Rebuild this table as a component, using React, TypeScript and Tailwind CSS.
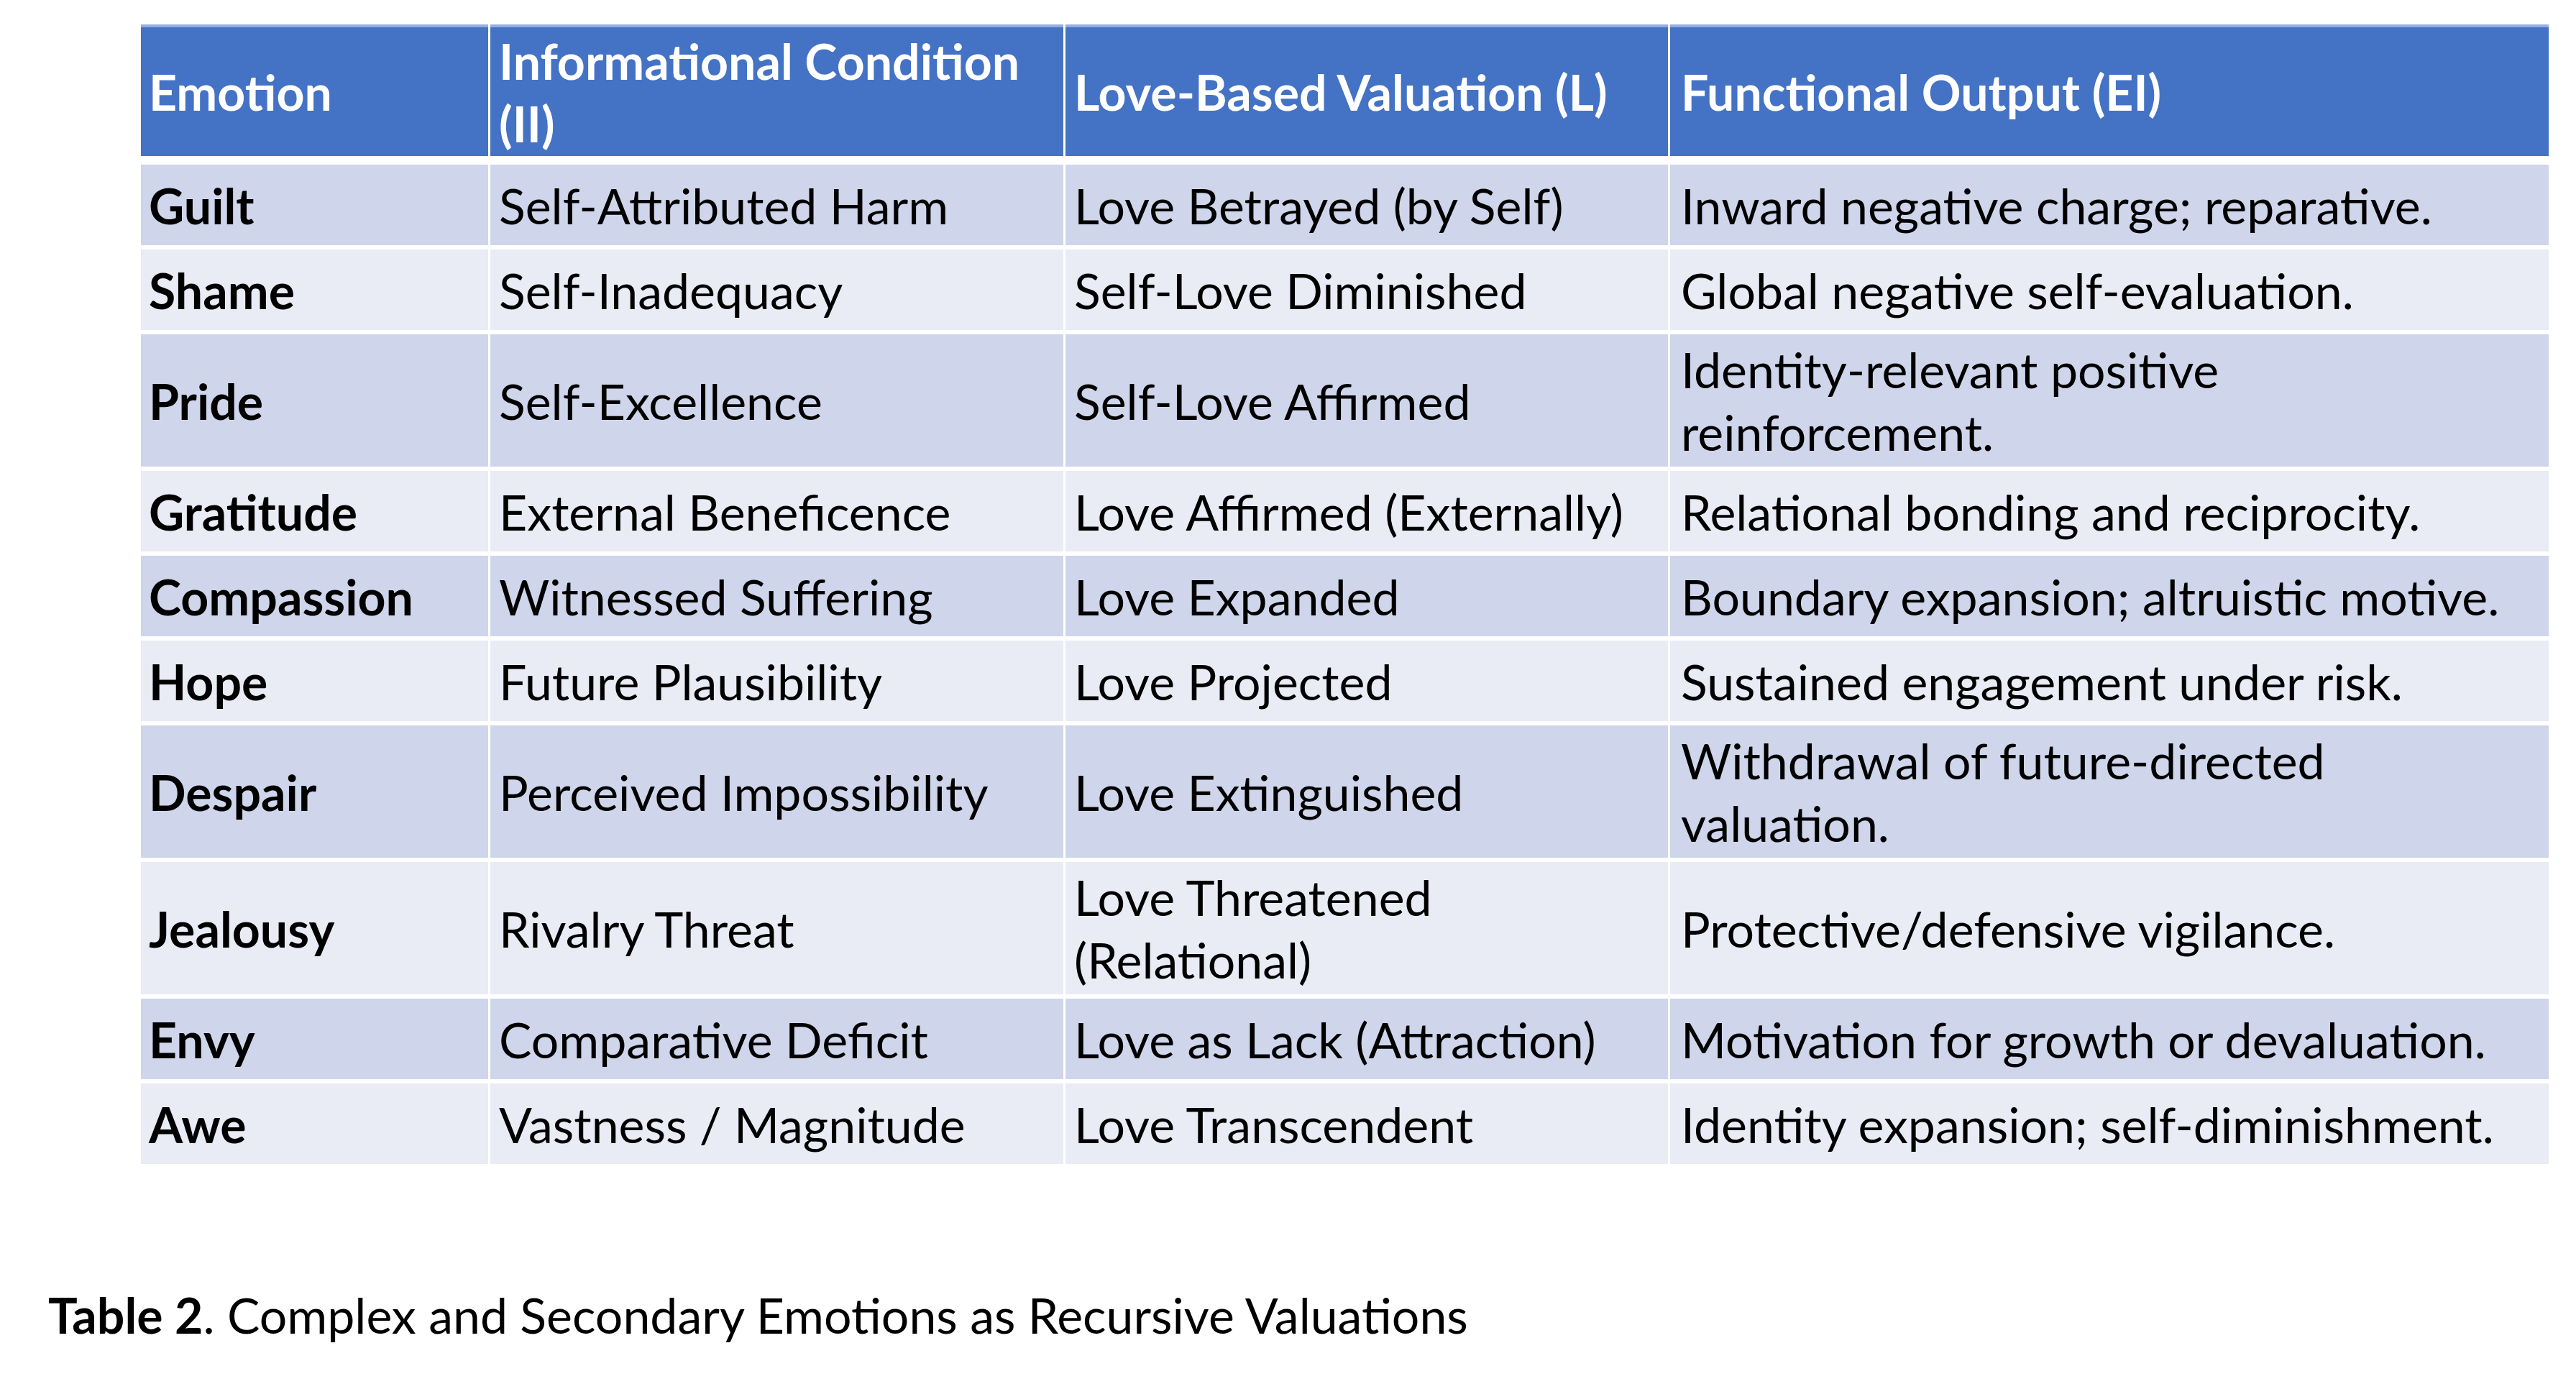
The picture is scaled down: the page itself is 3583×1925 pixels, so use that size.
import React from "react";

type Row = { e: string; c: string[]; l: string[]; f: string[]; tall?: boolean };

const rows: Row[] = [
  { e: "Guilt", c: ["Self-Attributed Harm"], l: ["Love Betrayed (by Self)"], f: ["Inward negative charge; reparative."] },
  { e: "Shame", c: ["Self-Inadequacy"], l: ["Self-Love Diminished"], f: ["Global negative self-evaluation."] },
  { e: "Pride", c: ["Self-Excellence"], l: ["Self-Love Affirmed"], f: ["Identity-relevant positive", "reinforcement."], tall: true },
  { e: "Gratitude", c: ["External Beneficence"], l: ["Love Affirmed (Externally)"], f: ["Relational bonding and reciprocity."] },
  { e: "Compassion", c: ["Witnessed Suffering"], l: ["Love Expanded"], f: ["Boundary expansion; altruistic motive."] },
  { e: "Hope", c: ["Future Plausibility"], l: ["Love Projected"], f: ["Sustained engagement under risk."] },
  { e: "Despair", c: ["Perceived Impossibility"], l: ["Love Extinguished"], f: ["Withdrawal of future-directed", "valuation."], tall: true },
  { e: "Jealousy", c: ["Rivalry Threat"], l: ["Love Threatened", "(Relational)"], f: ["Protective/defensive vigilance."], tall: true },
  { e: "Envy", c: ["Comparative Deficit"], l: ["Love as Lack (Attraction)"], f: ["Motivation for growth or devaluation."] },
  { e: "Awe", c: ["Vastness / Magnitude"], l: ["Love Transcendent"], f: ["Identity expansion; self-diminishment."] },
];

function Lines({ lines }: { lines: string[] }) {
  return (
    <div className="flex flex-col">
      {lines.map((t, i) => (
        <span key={i} className="block whitespace-nowrap leading-[87px]">
          {t}
        </span>
      ))}
    </div>
  );
}

export default function App() {
  return (
    <div
      className="w-[3583px] h-[1925px] bg-white text-black overflow-hidden"
      style={{ fontFamily: "Lato, 'Open Sans', sans-serif" }}
    >
      <div className="pt-[34px] pl-[196px]">
        <div className="flex flex-col w-[3349px] gap-y-[6px] text-[68px]">
          {/* header */}
          <div className="grid grid-cols-[483px_797px_838px_1222px] gap-x-[3px] h-[183px] mb-[6px] font-bold text-white">
            <div className="bg-[#4472C4] border-t-[4px] border-[#95AEDD] flex items-center pl-[11px]">
              <Lines lines={["Emotion"]} />
            </div>
            <div className="bg-[#4472C4] border-t-[4px] border-[#95AEDD] flex items-center pl-[12px]">
              <Lines lines={["Informational Condition", "(II)"]} />
            </div>
            <div className="bg-[#4472C4] border-t-[4px] border-[#95AEDD] flex items-center pl-[12px]">
              <Lines lines={["Love-Based Valuation (L)"]} />
            </div>
            <div className="bg-[#4472C4] border-t-[4px] border-[#95AEDD] flex items-center pl-[15px]">
              <Lines lines={["Functional Output (EI)"]} />
            </div>
          </div>
          {rows.map((r, i) => {
            const bg = i % 2 === 0 ? "bg-[#CFD5EA]" : "bg-[#E9EBF5]";
            return (
              <div
                key={r.e}
                className={`grid grid-cols-[483px_797px_838px_1222px] gap-x-[3px] ${r.tall ? "h-[184px]" : "h-[112px]"}`}
              >
                <div className={`${bg} flex items-center pl-[11px] font-bold`}>
                  <Lines lines={[r.e]} />
                </div>
                <div className={`${bg} flex items-center pl-[12px]`}>
                  <Lines lines={r.c} />
                </div>
                <div className={`${bg} flex items-center pl-[12px]`}>
                  <Lines lines={r.l} />
                </div>
                <div className={`${bg} flex items-center pl-[15px]`}>
                  <Lines lines={r.f} />
                </div>
              </div>
            );
          })}
        </div>
      </div>
      <div className="pl-[67px] mt-[166px] text-[68px] leading-[87px] whitespace-nowrap">
        <span className="font-bold">Table 2</span>. Complex and Secondary Emotions as Recursive Valuations
      </div>
    </div>
  );
}
